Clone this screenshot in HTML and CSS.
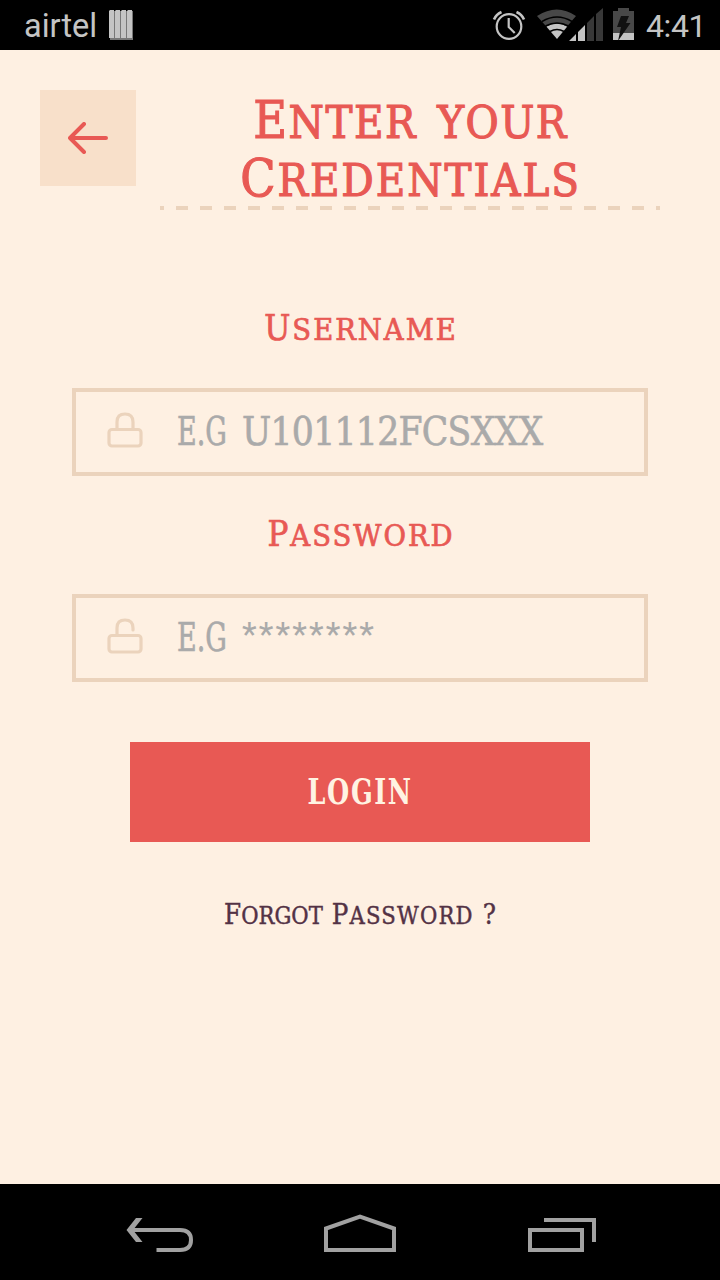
FILE: index.html
```html
<!DOCTYPE html>
<html lang="en">
<head>
<meta charset="utf-8">
<title>Login</title>
<link rel="stylesheet" href="styles.css">
</head>
<body>
<div class="phone">
  <header class="status">
    <span class="carrier">airtel</span>
    <svg class="bars" width="26" height="32" viewBox="0 0 26 32">
      <path fill="#777" d="M2 2h23v29H2z"/>
      <path fill="#c4c4c4" d="M2 1h4v28H1V2zM8 1h4v28H7V2zM14 1h4v28h-5V2zM20 1h4v28h-5V2z"/>
    </svg>
    <svg class="indicators" width="144" height="40" viewBox="492 5 144 40">
      <g fill="none" stroke="#c4c4c4" stroke-width="2.2">
        <circle cx="509" cy="26.5" r="12.3"/>
        <path d="M508.7 18v9l6 6"/>
        <path stroke-width="2.6" d="M494 19.5q2-5 7.5-7.5M524 19.5q-2-5-7.5-7.5"/>
      </g>
      <path fill="#c4c4c4" d="M557 39l-10.7-12.5q10.7-6 21 0z"/>
      <path fill="#484848" d="M546.3 26.5L537 16q20-13 39 0l-9 10.5q-10.300-6-20.700 0z"/>
      <g fill="none" stroke="#000" stroke-width="1.500">
        <path d="M542 21.500q15-9 30 0M545.500 26q11.500-6 23 0M550 31.500q7-4 14 0"/>
      </g>
      <path fill="#c4c4c4" d="M569 41l7-7v7zM578 32l7-7v16h-7z"/>
      <path fill="#383838" d="M587 23l7-7v25h-7zM596 14l7-6v33h-7z"/>
      <path fill="#484848" d="M613 11h5V8h11v3h5v22h-21z"/>
      <path fill="#c4c4c4" d="M613 33h21v7h-21z"/>
      <path fill="#111" d="M621 16h8l-3 7h4.500l-12.500 18 3-14h-4z"/>
    </svg>
    <span class="clock">4:41</span>
  </header>

  <main class="screen">
    <div class="top">
      <div class="back">
        <svg width="40" height="32" viewBox="0 0 40 32"><path d="M38 16H2M16 2L2 16l14 14"/></svg>
      </div>
      <div class="heading">
        <h1 class="title"><span class="line"><span class="cap">E</span>NTER YOUR</span><span class="line second"><span class="cap">C</span>REDENTIALS</span></h1>
        <div class="dashes"></div>
      </div>
    </div>

    <div class="form">
      <div class="label user"><span class="cap">U</span>SERNAME</div>
      <div class="field">
        <svg class="lock" width="36" height="36" viewBox="0 0 36 36"><rect x="2" y="17.500" width="32" height="16.500" rx="3"/><path d="M10 17V10q0-8 8-8t8 8v7"/></svg>
        <span class="eg">E.G</span><span class="hint">U101112FCSXXX</span>
      </div>
      <div class="label pass"><span class="cap">P</span>ASSWORD</div>
      <div class="field">
        <svg class="lock" width="36" height="36" viewBox="0 0 36 36"><rect x="2" y="17.500" width="32" height="16.500" rx="3"/><path d="M10 17V10q0-8 8-8t8 8v2"/></svg>
        <span class="eg">E.G</span><span class="hint stars">********</span>
      </div>
    </div>

    <div class="login"><span class="login-text">LOGIN</span></div>
    <div class="forgot"><span class="word f"><span class="cap">F</span>ORGOT</span><span class="word p"><span class="cap">P</span>ASSWORD</span><span class="word q">?</span></div>
  </main>

  <nav class="navbar">
    <svg width="68" height="36" viewBox="126 1217 68 36"><path class="solid" d="M136 1218h6.500l-9.500 12 9.500 12H136l-9.500-12z"/><path d="M131 1230h49q11 0 11 10t-11 10h-23.500"/></svg>
    <svg class="home" width="72" height="40" viewBox="324 1213 72 40"><path d="M326 1250v-21.500l34-12 34 12V1250z"/></svg>
    <svg width="68" height="36" viewBox="528 1217 68 36"><path d="M530 1230h52v20h-52zM544 1220h50v22"/></svg>
  </nav>
</div>
</body>
</html>
```
FILE: styles.css
```css
body { margin: 0; }
.phone {
  width: 720px; height: 1280px;
  display: flex; flex-direction: column;
  background: #fef0e2;
  overflow: hidden;
  font-family: "DejaVu Serif Condensed", "DejaVu Serif", serif;
  font-stretch: condensed;
}
svg { display: block; flex: none; }

.status {
  box-sizing: border-box; height: 50px; flex: none;
  display: flex; align-items: center;
  padding: 0 0 0 24px;
  background: #000; color: #c4c4c4;
  font: 32.500px/50px Roboto, sans-serif;
}
.carrier { width: 84px; flex: none; padding-top: 2px; }
.indicators { margin-left: 358px; }
.clock { flex: none; margin-left: 10px; padding-top: 2px; font-size: 32px; letter-spacing: -.4px; white-space: nowrap; }

.screen { flex: 1; display: flex; flex-direction: column; align-items: center; }
.top { display: flex; width: 640px; height: 120px; padding-top: 40px; gap: 24px; }
.back {
  width: 96px; height: 96px; flex: none;
  display: flex; align-items: center; justify-content: center;
  background: #f8e0ca;
}
.back path { fill: none; stroke: #e85954; stroke-width: 4; stroke-linecap: round; stroke-linejoin: round; }
.heading { width: 500px; }
.title {
  box-sizing: border-box; margin: 0; height: 116px; padding: 1px 0 0 1px;
  font-size: 45px; font-weight: 400;
  color: #e85954; letter-spacing: 1.500px; text-align: center;
  -webkit-text-stroke: 1.100px #e85954;
}
.title .cap { font-size: 51.500px; }
.line { display: block; height: 58px; line-height: 58px; white-space: nowrap; word-spacing: 6px; }
.second { letter-spacing: 1.900px; }
.dashes {
  height: 4px;
  background: repeating-linear-gradient(90deg, #ebd3bc 0 4px, transparent 4px 16px, #ebd3bc 16px 24px);
}

.form { width: 576px; margin-top: 90px; }
.label {
  height: 88px; line-height: 56px; box-sizing: border-box; padding-left: 2px;
  font-size: 30.500px; letter-spacing: 2px;
  color: #e85954; text-align: center;
  -webkit-text-stroke: .7px #e85954;
}
.label .cap { font-size: 34.500px; }
.field {
  box-sizing: border-box; height: 88px; margin-bottom: 30px;
  display: flex; align-items: center;
  padding-left: 31px;
  border: 4px solid #ebd3bc;
  font-size: 38.500px; line-height: 78px; color: #aaa;
  -webkit-text-stroke: .6px #aaa;
}
.lock { margin-bottom: 4px; fill: none; stroke: #ebd3bc; stroke-width: 3.200; stroke-linecap: round; }
.eg { width: 65px; margin-left: 34px; transform: scaleX(.78); transform-origin: 0 50%; }
.hint { letter-spacing: -.7px; }
.stars { padding-bottom: 8px; font-family: Roboto, sans-serif; font-size: 34px; letter-spacing: 2.100px; -webkit-text-stroke: 0; }

.login {
  width: 460px; height: 100px; margin-top: 30px;
  display: flex; align-items: center; justify-content: center;
  background: #e85954; color: #fff3e2;
  font-size: 34.500px; font-weight: 700;
}
.login-text { letter-spacing: 2px; transform: scaleX(.82); }
.forgot {
  display: flex; align-items: baseline; gap: 9px;
  margin-top: 46px; line-height: 54px;
  font-size: 23.500px; color: #533245;
  -webkit-text-stroke: .4px #533245;
}
.forgot .cap, .q { font-size: 27.400px; }
.p { letter-spacing: 1.200px; }

.navbar {
  box-sizing: border-box; height: 96px; flex: none;
  display: flex; justify-content: space-between; align-items: flex-end;
  padding: 0 124px 27px 126px;
  background: #000;
}
.home { margin-right: 2px; }
.navbar path { fill: none; stroke: #a1a1a1; stroke-width: 4; }
.navbar .solid { fill: #a1a1a1; stroke: none; }
```
